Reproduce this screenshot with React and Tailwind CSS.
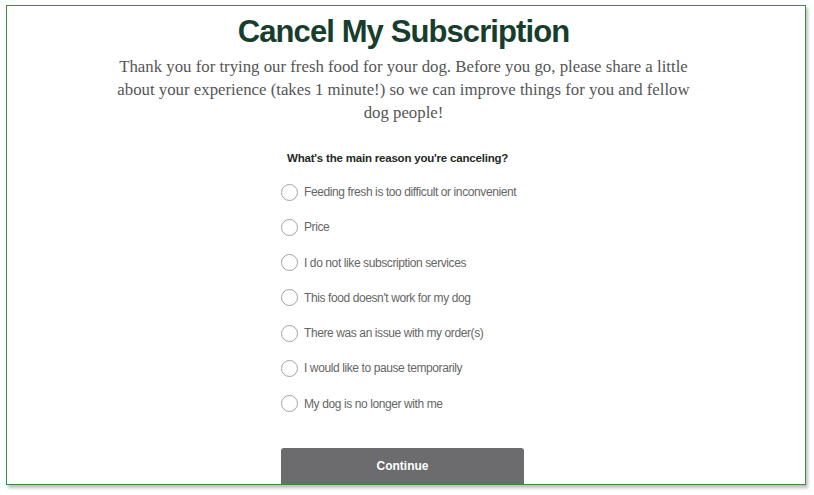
import React from 'react';

const reasons = [
  'Feeding fresh is too difficult or inconvenient',
  'Price',
  'I do not like subscription services',
  "This food doesn't work for my dog",
  'There was an issue with my order(s)',
  'I would like to pause temporarily',
  'My dog is no longer with me',
];

export default function App() {
  return (
    <div className="w-[814px] h-[495px] bg-white pt-[5px] pl-[6px]">
      {/* Framed screenshot */}
      <div className="w-[800px] h-[480px] border-[1.5px] border-[#3d8b43] bg-white overflow-hidden shadow-[2px_3px_3px_rgba(0,0,0,0.25)] flex flex-col items-center pr-[5px]">
        <h1
          className="mt-[7px] text-[31px] leading-[38px] font-bold tracking-[-0.9px] text-[#173d2c]"
          style={{ fontFamily: '"Liberation Sans", Arial, sans-serif' }}
        >
          Cancel My Subscription
        </h1>
        <p
          className="mt-[4px] w-[600px] text-center text-[16.8px] leading-[23px] text-[#555]"
          style={{ fontFamily: '"Liberation Serif", "Times New Roman", serif' }}
        >
          Thank you for trying our fresh food for your dog. Before you go, please share a little about your
          experience (takes 1 minute!) so we can improve things for you and fellow dog people!
        </p>

        <div
          className="mt-[26px] mr-[2px] w-[243px] flex flex-col"
          style={{ fontFamily: '"Liberation Sans", Arial, sans-serif' }}
        >
          <p className="pl-[6px] text-[11.5px] leading-[16px] font-bold text-[#1f2a24] whitespace-nowrap tracking-[-0.2px]">
            What's the main reason you're canceling?
          </p>
          <div className="mt-[18px] flex flex-col gap-[19.3px]">
            {reasons.map((r) => (
              <label key={r} className="flex items-center gap-[6px] h-[16px] cursor-pointer">
                <span className="w-[17px] h-[17px] rounded-full border border-[#a3a3a3] bg-white shrink-0" />
                <span className="text-[12px] leading-[16px] text-[#666] whitespace-nowrap tracking-[-0.4px]">
                  {r}
                </span>
              </label>
            ))}
          </div>
          <button className="mt-[36px] w-[243px] h-[44px] rounded-[3px] bg-[#6c6c6e] text-white text-[12px] font-bold pb-[7px]">
            Continue
          </button>
        </div>
      </div>
    </div>
  );
}
